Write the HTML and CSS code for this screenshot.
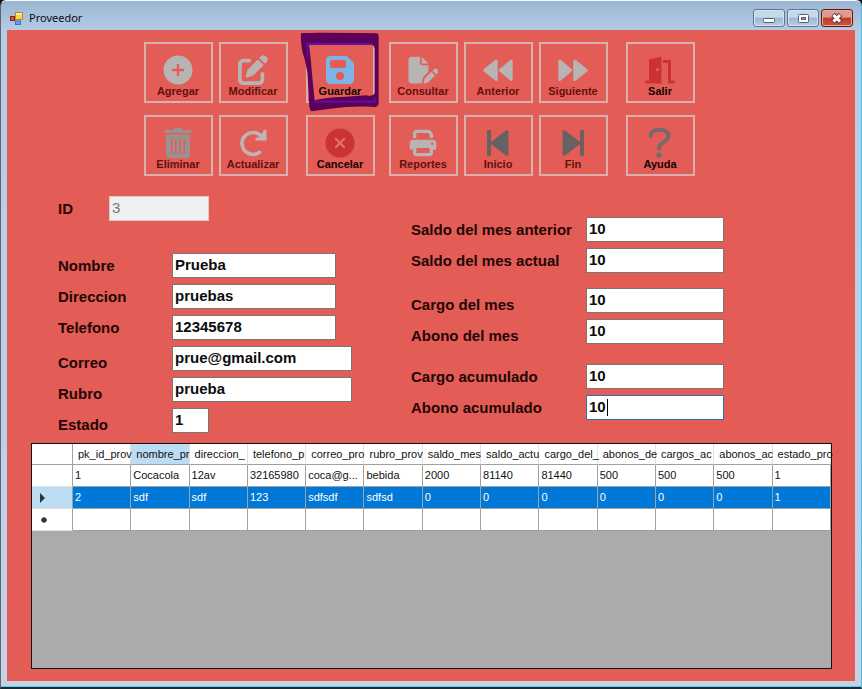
FILE: index.html
```html
<!DOCTYPE html>
<html lang="es">
<head>
<meta charset="utf-8">
<title>Proveedor</title>
<link rel="stylesheet" href="styles.css">
</head>
<body>
<div class="window">
  <header class="titlebar">
    <svg class="app-icon" viewBox="0 0 13 13" aria-hidden="true">
      <rect x="5.5" y="0.5" width="7" height="7" fill="#f8d24a" stroke="#b98a1c"/>
      <rect x="6" y="1" width="6" height="2" fill="#fdeb9c"/>
      <rect x="0.5" y="4.500" width="4" height="4" fill="#c9574a" stroke="#8d1f17"/>
      <rect x="5.500" y="9" width="5" height="3.500" fill="#6f9fe6" stroke="#3f6fc0"/>
    </svg>
    <h1 class="title">Proveedor</h1>
    <div class="window-buttons">
      <button class="win-btn" type="button" aria-label="Minimizar">
        <svg viewBox="0 0 30 16"><rect x="9.500" y="8.500" width="11" height="4" rx="1" fill="#fff" stroke="#555c6b"/></svg>
      </button>
      <button class="win-btn" type="button" aria-label="Maximizar">
        <svg viewBox="0 0 30 16"><rect x="10.500" y="4.500" width="10" height="8" rx="1" fill="#fff" stroke="#555c6b"/><rect x="13.500" y="7.500" width="4" height="2" fill="#8fa9c6" stroke="#555c6b"/></svg>
      </button>
      <button class="win-btn win-close" type="button" aria-label="Cerrar">
        <svg viewBox="0 0 30 16"><path d="M11 4.500l7.500 7.500M18.500 4.500l-7.500 7.500" stroke="#5d3c45" stroke-width="5"/><path d="M11.500 5l6.500 6.500M18 5l-6.500 6.500" stroke="#fff" stroke-width="3"/></svg>
      </button>
    </div>
  </header>

  <main class="client">
    <nav class="toolbar" aria-label="Acciones">
      <div class="tool-row">
        <div class="tool-group">
          <button class="tool dim" type="button">
            <svg class="light" viewBox="0 0 30 30"><path fill-rule="evenodd" d="M15 .5a14.500 14.500 0 1 1 0 29a14.500 14.500 0 1 1 0-29zM13.800 9v4.800H9v2.400h4.800V21h2.400v-4.800H21v-2.400h-4.800V9z"/></svg>
            Agregar
          </button>
          <button class="tool dim" type="button">
            <svg class="light" viewBox="0 0 512 512"><path d="M471.6 21.7c-21.9-21.9-57.3-21.9-79.2 0L362.3 51.7l97.9 97.9 30.1-30.1c21.9-21.9 21.9-57.3 0-79.2L471.6 21.7zm-299.2 220c-6.1 6.1-10.8 13.6-13.5 21.9l-29.6 88.8c-2.9 8.6-.6 18.1 5.8 24.6s15.9 8.7 24.6 5.8l88.8-29.6c8.2-2.7 15.7-7.4 21.9-13.500L437.7 172.3 339.7 74.3 172.4 241.7zM96 64C43 64 0 107 0 160V416c0 53 43 96 96 96H352c53 0 96-43 96-96V320c0-17.7-14.3-32-32-32s-32 14.3-32 32v96c0 17.7-14.3 32-32 32H96c-17.7 0-32-14.3-32-32V160c0-17.7 14.3-32 32-32h96c17.7 0 32-14.3 32-32s-14.3-32-32-32H96z"/></svg>
            Modificar
          </button>
        </div>
        <div class="tool-group">
          <button class="tool marked" type="button">
            <svg class="blue" viewBox="-16 16 480 480"><path fill-rule="evenodd" d="M64 32C28.7 32 0 60.7 0 96V416c0 35.3 28.7 64 64 64H384c35.3 0 64-28.7 64-64V173.3c0-17-6.7-33.3-18.7-45.3L352 50.7C340 38.7 323.7 32 306.7 32H64zm0 96c0-17.7 14.3-32 32-32H288c17.7 0 32 14.3 32 32v64c0 17.7-14.3 32-32 32H96c-17.7 0-32-14.3-32-32V128zM224 288a64 64 0 1 1 0 128 64 64 0 1 1 0-128z"/></svg>
            Guardar
            <span class="scribble" aria-hidden="true">
              <svg viewBox="0 0 240 240">
                <path fill="#5c0058" fill-rule="evenodd" d="M3 4L60 2L160 3L232 4Q238 10 236 30L236 216Q232 228 215 224Q150 221 90 230L34 238Q26 232 27 195L22 120Q16 85 8 62Q1 30 3 4zM27 38L32 80Q38 150 44 205Q80 196 125 195L200 190Q218 195 224 184L224 52Q222 36 210 38z"/>
                <path fill="none" stroke="#5b10b2" stroke-width="5" d="M215 35H22V75M42 209H224V196"/>
              </svg>
            </span>
          </button>
        </div>
        <div class="tool-group spaced">
          <button class="tool dim" type="button">
            <svg class="light" viewBox="-8 -22 576 550"><path d="M0 64C0 28.7 28.7 0 64 0H224V128c0 17.7 14.3 32 32 32H384V285.7l-86.8 86.8c-10.3 10.3-17.500 23.1-21 37.2l-18.7 74.9c-2.3 9.2-1.8 18.8 1.3 27.500H64c-35.3 0-64-28.7-64-64V64zm384 64H256V0L384 128zM549.8 235.7l14.4 14.4c15.6 15.6 15.6 40.9 0 56.6l-29.4 29.4-71-71 29.4-29.4c15.6-15.6 40.9-15.6 56.6 0zM311.9 417L441.1 287.8l71 71L382.9 487.9c-4.1 4.1-9.2 7-14.9 8.4l-60.1 15c-5.500 1.4-11.2-.2-15.2-4.2s-5.6-9.7-4.2-15.2l15-60.1c1.4-5.6 4.3-10.8 8.4-14.9z"/></svg>
            Consultar
          </button>
          <button class="tool dim" type="button">
            <svg class="light" viewBox="0 0 30 30"><path d="M.6 14.200L12.500 4.800Q14.500 3.700 14.700 6V24.500Q14.500 26.800 12.500 25.700L.6 16.300Q-.5 15.200 .6 14.200zM16.200 14.200L27.500 4.800Q29.500 3.700 29.700 6V24.500Q29.500 26.800 27.500 25.700L16.200 16.300Q15.200 15.200 16.200 14.200z"/></svg>
            Anterior
          </button>
          <button class="tool dim" type="button">
            <svg class="light" viewBox="0 0 30 30"><path d="M13.800 14.200L2.500 4.800Q.5 3.700 .3 6V24.500Q.5 26.800 2.500 25.700L13.800 16.300Q14.800 15.200 13.800 14.200zM29.400 14.200L17.500 4.800Q15.500 3.700 15.300 6V24.500Q15.500 26.800 17.500 25.700L29.400 16.300Q30.500 15.200 29.400 14.200z"/></svg>
            Siguiente
          </button>
        </div>
        <div class="tool-group">
          <button class="tool" type="button">
            <svg class="red" viewBox="0 0 30 30"><path fill-rule="evenodd" d="M4 4.500L16.500 1.500V28.500H1Q0 28.500 0 27T1 25.500H4zM12.500 13a1.500 1.700 0 1 0 0 3.400a1.500 1.700 0 1 0 0-3.400zM18 5H26V25.500H29Q30 25.500 30 27T29 28.500H23V8H18z"/></svg>
            Salir
          </button>
        </div>
      </div>
      <div class="tool-row">
        <div class="tool-group">
          <button class="tool dim" type="button">
            <svg class="mid" viewBox="0 0 30 30"><path fill-rule="evenodd" d="M1.500 2H10L11 0H19L20 2H28.500V5H1.500zM3 6.500H27V27Q27 30 24 30H6Q3 30 3 27zM8 11V26H9.500V11zM12 11V26H13.500V11zM16.500 11V26H18V11zM20.500 11V26H22V11z"/></svg>
            Eliminar
          </button>
          <button class="tool dim" type="button">
            <svg viewBox="0 0 30 30"><path fill="none" stroke="#bdb5b5" stroke-width="3.600" stroke-linecap="round" d="M21.500 24.300A11 11 0 1 1 23.500 8.500"/><path fill="#bdb5b5" d="M28.500 2V12.500H17.500V9.500H22L26 1.500z"/></svg>
            Actualizar
          </button>
        </div>
        <div class="tool-group">
          <button class="tool" type="button">
            <svg viewBox="0 0 30 30"><circle cx="15" cy="15" r="14.500" fill="#cb3234"/><path d="M11 11l8 8M19 11l-8 8" stroke="#e5716d" stroke-width="2.200" stroke-linecap="round"/></svg>
            Cancelar
          </button>
        </div>
        <div class="tool-group spaced">
          <button class="tool dim" type="button">
            <svg class="light" viewBox="-32 -32 576 576"><path fill-rule="evenodd" d="M128 0C92.7 0 64 28.7 64 64v96h64V64H354.7L384 93.3V160h64V93.3c0-17-6.7-33.3-18.7-45.3L400 18.7C388 6.7 371.7 0 354.7 0H128zM384 352v32 64H128V384 368 352H384zm64 32h32c17.7 0 32-14.3 32-32V256c0-35.3-28.7-64-64-64H64c-35.3 0-64 28.7-64 64v96c0 17.7 14.3 32 32 32H64v64c0 35.3 28.7 64 64 64H384c35.3 0 64-28.7 64-64V384zM432 248a24 24 0 1 1 0 48 24 24 0 1 1 0-48z"/></svg>
            Reportes
          </button>
          <button class="tool dim" type="button">
            <svg class="dark" viewBox="0 0 30 30"><path d="M4 3Q4 2 5 2H7Q8 2 8 3V14L23 2.500Q25.500 1.500 25.500 4V26Q25.500 28.500 23 27.500L8 16V27Q8 28 7 28H5Q4 28 4 27z"/></svg>
            Inicio
          </button>
          <button class="tool dim" type="button">
            <svg class="dark" viewBox="0 0 30 30"><path d="M26 3Q26 2 25 2H23Q22 2 22 3V14L7 2.500Q4.500 1.500 4.500 4V26Q4.500 28.500 7 27.500L22 16V27Q22 28 23 28H25Q26 28 26 27z"/></svg>
            Fin
          </button>
        </div>
        <div class="tool-group">
          <button class="tool" type="button">
            <svg viewBox="0 0 30 30"><path fill="none" stroke="#786a6a" stroke-width="4" stroke-linecap="round" d="M5.500 8Q6.500 2 13 2H16.500Q23.500 2.500 23.500 8Q23.500 11.500 19 14Q14 16.500 14 20.500"/><circle cx="14" cy="27.300" r="2.700" fill="#786a6a"/></svg>
            Ayuda
          </button>
        </div>
      </div>
    </nav>

    <form class="form">
      <div class="column column-left">
        <div class="field field-id">
          <label for="id">ID</label>
          <input id="id" type="text" value="3" disabled>
        </div>
        <div class="fields">
          <div class="field"><label for="nombre">Nombre</label><input id="nombre" type="text" value="Prueba"></div>
          <div class="field"><label for="direccion">Direccion</label><input id="direccion" type="text" value="pruebas"></div>
          <div class="field"><label for="telefono">Telefono</label><input id="telefono" type="text" value="12345678"></div>
        </div>
        <div class="fields low">
          <div class="field"><label for="correo">Correo</label><input class="wide" id="correo" type="text" value="prue@gmail.com"></div>
          <div class="field"><label for="rubro">Rubro</label><input class="wide" id="rubro" type="text" value="prueba"></div>
          <div class="field"><label for="estado">Estado</label><input class="tiny" id="estado" type="text" value="1"></div>
        </div>
      </div>
      <div class="column column-right">
        <div class="fields">
          <div class="field"><label for="saldo-anterior">Saldo del mes anterior</label><input id="saldo-anterior" type="text" value="10"></div>
          <div class="field"><label for="saldo-actual">Saldo del mes actual</label><input id="saldo-actual" type="text" value="10"></div>
        </div>
        <div class="fields low">
          <div class="field"><label for="cargo-mes">Cargo del mes</label><input id="cargo-mes" type="text" value="10"></div>
          <div class="field"><label for="abono-mes">Abono del mes</label><input id="abono-mes" type="text" value="10"></div>
        </div>
        <div class="fields totals">
          <div class="field"><label for="cargo-acumulado">Cargo acumulado</label><input id="cargo-acumulado" type="text" value="10"></div>
          <div class="field"><label for="abono-acumulado">Abono acumulado</label><span class="active"><input id="abono-acumulado" type="text" value="10"></span></div>
        </div>
      </div>
    </form>

    <section class="grid" aria-label="Proveedores">
      <table>
        <thead>
          <tr>
            <th class="row-head"></th>
            <th>pk_id_prov</th><th class="current">nombre_pr</th><th>direccion_</th><th>telefono_p</th><th>correo_pro</th><th>rubro_prov</th><th>saldo_mes</th><th>saldo_actu</th><th>cargo_del_</th><th>abonos_de</th><th>cargos_ac</th><th>abonos_ac</th><th>estado_pro</th>
          </tr>
        </thead>
        <tbody>
          <tr><th class="row-head"></th><td>1</td><td>Cocacola</td><td>12av</td><td>32165980</td><td>coca@g...</td><td>bebida</td><td>2000</td><td>81140</td><td>81440</td><td>500</td><td>500</td><td>500</td><td>1</td></tr>
          <tr class="selected"><th class="row-head"><svg viewBox="0 0 10 10"><path d="M2 0L7 5L2 10z"/></svg></th><td>2</td><td>sdf</td><td>sdf</td><td>123</td><td>sdfsdf</td><td>sdfsd</td><td>0</td><td>0</td><td>0</td><td>0</td><td>0</td><td>0</td><td>1</td></tr>
          <tr><th class="row-head"><svg viewBox="0 0 10 10"><path d="M6 2v6M3 5h6M4 3l4 4M8 3l-4 4" stroke="#333" stroke-width="1.300"/></svg></th><td></td><td></td><td></td><td></td><td></td><td></td><td></td><td></td><td></td><td></td><td></td><td></td><td></td></tr>
        </tbody>
      </table>
    </section>
  </main>
</div>
</body>
</html>
```
FILE: styles.css
```css
* {
  box-sizing: border-box;
}

body {
  margin: 0;
  background: #111;
  font-family: "Liberation Sans", Arial, sans-serif;
}

.window {
  display: flex;
  flex-direction: column;
  min-height: 100vh;
  padding: 0 6px 6px;
  border: 1px solid #5d6670;
  border-top-color: #f4f8fc;
  border-right-color: #3fc4e4;
  border-bottom: 2px solid #1c2b33;
  border-radius: 6px 6px 0 0;
  background: linear-gradient(#9ab5d3, #b5cce6 30px, #bdd0e9 60%, #c8d0e6);
  box-shadow: inset 0 -1px #4fd0ec;
}

.titlebar {
  display: flex;
  align-items: center;
  height: 29px;
  padding: 5px 2px 0 3px;
}

.app-icon {
  width: 13px;
  height: 13px;
  margin-right: 6px;
}

.title {
  flex: 1;
  margin: 0;
  font: 400 11px/16px "Noto Sans", "Open Sans", sans-serif;
  color: #0b0f18;
}

.window-buttons {
  display: flex;
  gap: 2px;
}

.win-btn {
  width: 32px;
  height: 18px;
  padding: 0;
  border: 1px solid #5f7690;
  border-radius: 3px;
  background: linear-gradient(#c6d8eb 45%, #9db7d3 50%, #b7cee6);
  box-shadow: inset 0 0 0 1px #d5e3f1;
}

.win-btn svg {
  display: block;
  width: 30px;
  height: 16px;
}

.win-close {
  border-color: #5c1a1a;
  background: linear-gradient(#e09a8c 45%, #bf3a24 50%, #d0563c);
  box-shadow: inset 0 0 0 1px #e5a99e;
}

.client {
  display: flex;
  flex: 1;
  flex-direction: column;
  padding: 12px 23px 12px 24px;
  background: #e35c55;
}

.toolbar {
  display: flex;
  flex-direction: column;
  align-items: center;
  gap: 12px;
  padding-right: 24px;
}

.tool-row {
  display: flex;
  gap: 18px;
}

.tool-group {
  display: flex;
  gap: 6px;
}

.tool-group.spaced {
  margin-left: -4px;
}

.tool {
  position: relative;
  display: flex;
  flex-direction: column;
  align-items: center;
  width: 69px;
  height: 61px;
  padding: 11px 1px 0 0;
  border: 2px solid #d8b0ae;
  background: transparent;
  font: 700 11px/12px "Liberation Sans", Arial, sans-serif;
  color: #150203;
}

.tool > svg {
  width: 30px;
  height: 30px;
}

.dim {
  color: #64100f;
}

.light {
  fill: #b9b4b4;
}

.mid {
  fill: #9c9190;
}

.dark {
  fill: #666162;
}

.blue {
  fill: #7db4e6;
}

.red {
  fill: #cb3234;
}

.scribble {
  position: absolute;
  top: -12px;
  left: -8px;
  width: 80px;
  height: 80px;
}

.scribble svg {
  display: block;
}

.form {
  display: flex;
  margin-top: 20px;
  font-size: 15px;
  font-weight: 700;
  color: #240606;
}

.column-left {
  flex: 0 0 380px;
  padding-left: 27px;
}

.column-right {
  padding-top: 21px;
}

.field {
  display: flex;
  height: 25px;
}

.field label {
  width: 114px;
  line-height: 25px;
}

.low label {
  padding-top: 4px;
}

.column-right label {
  width: 175px;
}

.fields {
  display: flex;
  flex-direction: column;
  gap: 6px;
}

.column-left .fields.low {
  margin-top: 6px;
}

.column-right .fields.low {
  margin-top: 15px;
}

.totals {
  margin-top: 20px;
}

.field-id {
  margin-bottom: 32px;
}

.field-id label {
  width: 51px;
}

.field input {
  width: 164px;
  height: 25px;
  padding: 0 2px 2px;
  border: 1px solid #7c7674;
  border-radius: 0;
  background: #fff;
  font: 700 15px "Liberation Sans", Arial, sans-serif;
  color: #0c0c0c;
}

.field input.wide {
  width: 180px;
}

.field input.tiny {
  width: 37px;
}

.field-id input {
  width: 100px;
  border-color: #d8cccb;
  background: #f0f0f0;
  font-weight: 400;
  color: #777;
}

.column-right .field input {
  width: 138px;
}

.active {
  position: relative;
}

.column-right .active input {
  border-color: #2f6fb4;
  outline: none;
}

.active::after {
  content: "";
  position: absolute;
  top: 4px;
  left: 21px;
  width: 1px;
  height: 17px;
  background: #000;
}

.grid {
  flex: 1;
  margin-top: 10px;
  border: 1px solid #111;
  background: #ababab;
}

table {
  width: 100%;
  border-collapse: separate;
  border-spacing: 0;
  table-layout: fixed;
  font-size: 11px;
  line-height: 15px;
  color: #111;
}

th,
td {
  height: 22px;
  padding: 0 2px;
  border-right: 1px solid #a0a0a0;
  border-bottom: 1px solid #a0a0a0;
  background: #fff;
  font-weight: 400;
  text-align: left;
  white-space: nowrap;
}

thead th {
  height: 21px;
  padding: 0 0 0 5px;
  border-right-color: #e2e2e2;
}

th.row-head {
  width: 41px;
  padding: 0 6px;
  border-right-color: #a0a0a0;
}

tbody th.row-head {
  border-bottom-color: #e2e2e2;
}

.row-head svg {
  display: block;
  width: 10px;
  height: 10px;
  fill: #333;
}

.current,
.selected .row-head {
  background: #bcdcf4;
}

.selected td {
  background: #0078d7;
  color: #fff;
}
```
